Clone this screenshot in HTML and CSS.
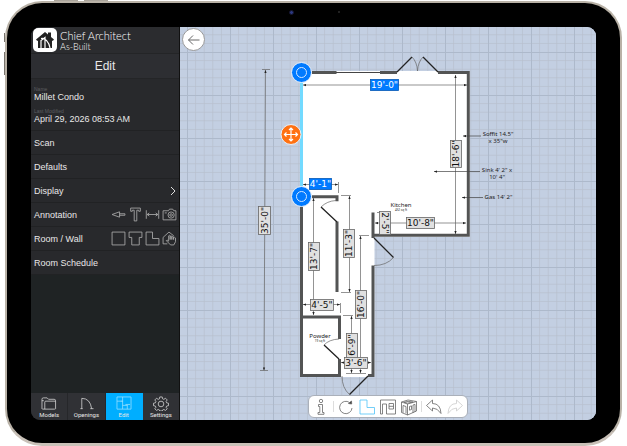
FILE: index.html
```html
<!DOCTYPE html>
<html lang="en">
<head>
<meta charset="utf-8">
<title>Chief Architect As-Built</title>
<link rel="stylesheet" href="styles.css">
</head>
<body>
<div class="tablet">
  <i class="camera"></i><i class="sensor"></i>
  <i class="key key-up"></i><i class="key key-down"></i>
  <i class="side side-a"></i><i class="side side-b"></i>
  <main class="screen">
    <aside class="sidebar">
      <header class="brand">
        <svg class="logo" viewBox="0 0 24 24" aria-hidden="true">
          <rect width="24" height="24" rx="5" fill="#fff"/>
          <path d="M3 11.500 12 4l3 2.500V4.500h3v4.500l3 2.500-1.300 1.500-.7-.5V20H5v-7.500l-.7.500z" fill="#222"/>
          <path d="M8 20V12.500l4-3V20M8 10.500C12 9.500 16 14 17 20" fill="none" stroke="#fff" stroke-width="1.200"/>
        </svg>
        <div class="brand-text"><span class="brand-name">Chief Architect</span><span class="brand-product">As-Built</span></div>
      </header>
      <h1 class="title">Edit</h1>
      <dl class="info">
        <dt>Name</dt><dd>Millet Condo</dd>
        <dt>Last Modified</dt><dd>April 29, 2026 08:53 AM</dd>
      </dl>
      <ul class="menu">
        <li><a href="#scan">Scan</a></li>
        <li><a href="#defaults">Defaults</a></li>
        <li><a href="#display">Display</a>
          <svg class="chevron" viewBox="0 0 6 10" aria-hidden="true"><path d="M1 1l4 4-4 4" fill="none" stroke="#ddd"/></svg></li>
        <li><span>Annotation</span>
          <div class="tools">
            <button aria-label="Arrow"><svg viewBox="0 0 14 14"><path d="M8 4.500 1 7l7 2.500zM8 6.300h5v1.400H8"/></svg></button>
            <button aria-label="Text"><svg viewBox="0 0 14 14"><path d="M2.500 1h9v3H10V3H8.200v10H5.800V3H4v1H2.500z"/></svg></button>
            <button aria-label="Dimension"><svg viewBox="0 0 14 14"><path d="M1.200 3v8M12.800 3v8M2 7h10M4 5.500 2 7l2 1.500M10 5.500 12 7l-2 1.500"/></svg></button>
            <button aria-label="Photo"><svg viewBox="0 0 14 14"><path d="M1 3.500h5l1-1.500h3l1 1.500h2v8.500H1z"/><circle cx="8.500" cy="7.500" r="2.900"/><circle cx="8.500" cy="7.500" r="1.200"/><path d="M2.500 5.500h2"/></svg></button>
          </div></li>
        <li><span>Room / Wall</span>
          <div class="tools">
            <button aria-label="Square room"><svg viewBox="0 0 14 14"><path d="M1 1h12v12H1z"/></svg></button>
            <button aria-label="T-shaped room"><svg viewBox="0 0 14 14"><path d="M1 1h12v5h-2.500v7h-7V6H1z"/></svg></button>
            <button aria-label="L-shaped room"><svg viewBox="0 0 14 14"><path d="M1 1h6v6h6v6H1z"/></svg></button>
            <button aria-label="Draw room"><svg viewBox="0 0 14 14"><path d="M5 12H1V6l5.500-5L11 4.500M6.200 9.500V4.500q.7-1 1.400 0V8V5q.8-1 1.600 0v3V5.500q.8-1 1.600 0V8V6.200q1-.8 1.800.3V10L11 13H8L4 9q.5-1.300 2.200.5"/></svg></button>
          </div></li>
        <li><a href="#schedule">Room Schedule</a></li>
      </ul>
      <nav class="tabs">
        <button class="tab"><svg viewBox="0 0 18 16"><path d="M1.500 13.500V3.500q0-1.500 1.500-1.500h4l1.500 1.500h6q1.500 0 1.500 1.500v8.500q0 .5-1 .5H2.500q-1 0-1-.5zM4.500 14V6.500q0-1 1-1H16M1.500 5h2"/></svg>Models</button>
        <button class="tab"><svg viewBox="0 0 18 16"><path d="M4.500 13.500V2.500q9 0 10.500 11M3 13.500h2.500M13.500 13.500H17"/></svg>Openings</button>
        <button class="tab active"><svg viewBox="0 0 18 16"><path d="M1.500 1h15v13h-15zM7.500 1v5M1.500 5.500h5M7.500 5v9M7.500 10h5M10.500 9h5M12.500 14v-4.500M5.500 5.500h2"/></svg>Edit</button>
        <button class="tab"><svg viewBox="0 0 18 16"><path d="M7.700 1h2.600l.4 2 1.300.6 1.800-1.200 1.800 1.800-1.200 1.800.6 1.300 2 .4v2.600l-2 .4-.6 1.300 1.200 1.600-1.800 1.800-1.800-1.100-1.300.6-.4 1.100H7.700l-.4-1.100-1.300-.6-1.800 1.100-1.800-1.800 1.200-1.600-.6-1.300-2-.4V7.700l2-.4L3.600 6 2.400 4.200l1.800-1.800L6 3.600 7.300 3z"/><circle cx="9" cy="8.500" r="3"/></svg>Settings</button>
      </nav>
    </aside>

    <section class="canvas">
      <svg class="plan" viewBox="180 27 416 393" preserveAspectRatio="xMidYMid slice" role="img" aria-label="Floor plan">
        <defs>
          <pattern id="grid" x="187" y="52" width="43" height="43" patternUnits="userSpaceOnUse">
            <path class="minor" d="M8.600 0v43M17.200 0v43M25.800 0v43M34.400 0v43M0 8.600h43M0 17.200h43M0 25.800h43M0 34.400h43"/>
            <path class="major" d="M.5 0v43M0 .5h43"/>
          </pattern>
          <marker id="tip" viewBox="0 0 4 4" refX="4" refY="2" markerWidth="3" markerHeight="3" markerUnits="userSpaceOnUse" orient="auto-start-reverse"><path d="M0 .5 4 2 0 3.500z" fill="#222"/></marker>
        </defs>
        <rect x="180" y="27" width="416" height="393" fill="#c3cfe2"/>
        <rect x="180" y="27" width="416" height="393" fill="url(#grid)"/>
        <path d="M300 71H470V237H374.500V377H300z" fill="#fff"/>

        <g class="walls">
          <path d="M312 72.500h24.500M380 72.500h17M438 72.500h30.300V235.200H373M373 212.500v25.500M373 265.500v110H368M341 375.500H301.500V200M312 196.700h25v4.500M337 221.500V292M303 317h36.500v22M339.500 359v16"/>
        </g>
        <path d="M336 72.500h44" stroke="#444"/>
        <g class="leaves">
          <path d="M397 72l15-15M438 72l-15-15M374 238l19.500 19.500M337 222l-16-15M339 359l-15-14M368 376l-18.500 18.500"/>
        </g>
        <g class="swings">
          <path d="M412 57q5 5 5.500 14q.5-9 5.500-14M393.500 257.500q-7 8-19.500 8M321 207q6-6 15-6.500M324 345q5-5.500 15-6M342 376q0 12 7.500 18.500"/>
        </g>
        <path class="selected" d="M301.500 78v112"/>

        <g class="dims">
          <path d="M265.500 70 264 370.500"/><path d="M303 85H467"/><path d="M455.500 75V234"/><path d="M303 184.500H338"/>
          <path d="M313.500 198V315"/><path d="M349.500 196V292"/><path d="M360.500 236V373"/><path d="M351.500 316V373"/>
          <path d="M341 362.500H371"/><path d="M303 304.500H340"/><path d="M375 223H466"/>
        </g>
        <path class="ticks" d="M262 69.500h8M260 370.500h8M338.500 182v11M341 195.500h10M341 292.500h10M359 235.500h10M343 315.500h10M340.500 303v10M377 212.500h8M346 373.500h20"/>

        <g class="tags">
          <rect x="258.500" y="206.500" width="12" height="28"/>
          <rect x="450.500" y="140.500" width="11" height="27"/>
          <rect x="308.500" y="242.500" width="11" height="28"/>
          <rect x="343.500" y="229.500" width="11" height="28"/>
          <rect x="355.500" y="290.500" width="11" height="28"/>
          <rect x="346.500" y="333.500" width="11" height="25"/>
          <rect x="344.500" y="357.500" width="23" height="11"/>
          <rect x="310.500" y="299.500" width="23" height="11"/>
          <rect x="406.500" y="217.500" width="28" height="11"/>
          <rect x="379.500" y="211.500" width="11" height="23"/>
          <rect class="hot" x="370.500" y="79.500" width="28" height="11"/>
          <rect class="hot" x="309.500" y="178.500" width="22" height="11"/>
        </g>
        <g class="values">
          <text transform="translate(268 220.500) rotate(-90)">35'-0"</text>
          <text transform="translate(459 154) rotate(-90)">18'-6"</text>
          <text transform="translate(317 256.500) rotate(-90)">13'-7"</text>
          <text transform="translate(352 243.500) rotate(-90)">11'-3"</text>
          <text transform="translate(364 304.500) rotate(-90)">16'-0"</text>
          <text transform="translate(355 345) rotate(-90)">6'-9"</text>
          <text x="356" y="366">3'-6"</text>
          <text x="322" y="308">4'-5"</text>
          <text x="420.500" y="226">10'-8"</text>
          <text transform="translate(382 223) rotate(90)">2'-5"</text>
          <text class="hot" x="384.500" y="88">19'-0"</text>
          <text class="hot" x="320.500" y="187">4'-1"</text>
        </g>

        <g class="notes">
          <text x="401" y="207">Kitchen</text>
          <text class="area" x="401" y="211">452 sq ft</text>
          <text x="320" y="338">Powder</text>
          <text class="area" x="320" y="342">19 sq ft</text>
          <text x="498" y="136">Soffit 14.5"</text>
          <text x="498" y="143">x 35"w</text>
          <text x="497" y="172">Sink 4' 2" x</text>
          <text x="497" y="179">10' 4"</text>
          <text x="498.500" y="199">Gas 14' 2"</text>
        </g>
        <g class="leaders"><path d="M481 136H463"/><path d="M480 171.500H434"/><path d="M483 197.500H462"/></g>

        <g class="handles">
          <circle cx="301.500" cy="72.500" r="10"/><circle class="ring" cx="301.500" cy="72.500" r="5"/>
          <circle cx="301.500" cy="196.500" r="10"/><circle class="ring" cx="301.500" cy="196.500" r="5"/>
          <circle class="move" cx="291" cy="134.500" r="10"/>
          <path class="arrows" d="M284.500 134.500h13M291 128v13M286.500 132.500l-2 2 2 2M295.500 132.500l2 2-2 2M289 130l2-2 2 2M289 139l2 2 2-2"/>
        </g>
      </svg>

      <button class="back" aria-label="Back"><svg viewBox="0 0 14 12"><path d="M12.500 6h-11M6 1.500 1.500 6 6 10.500"/></svg></button>

      <div class="toolbar">
        <button aria-label="Information"><svg viewBox="0 0 18 18"><circle cx="9" cy="3" r="1.700"/><path d="M6.500 6.500h4v8H12v1.800H6v-1.800h1.800v-6H6.500z"/></svg></button>
        <i class="divider"></i>
        <button aria-label="Rotate"><svg viewBox="0 0 18 18"><path d="M12.500 4.500A6.200 6.200 0 1 0 15 10"/><path class="solid" d="M11.500 5.500l3-2.500.2 3z"/></svg></button>
        <button aria-label="Floor plan" class="on"><svg viewBox="0 0 18 18"><path d="M2 2h7v7.500h7.500V16H2z"/></svg></button>
        <button aria-label="Elevation"><svg viewBox="0 0 18 18"><path d="M1.500 16V2h15v14h-9V6h-4v10zM10 5.500h4.500v5.500H10zM10 8.300h4.500"/></svg></button>
        <button aria-label="3D view"><svg viewBox="0 0 18 18"><path d="M1.500 4 8 2l8.500 1.500V13L7.500 17l-6-2.500zM1.500 4l6 2v11M7.500 6l9-2.500M3 14.800V7.500l3 1v7M9.500 8.500l2-.6v3.600l-2 .7zM13 15V7l2-.6v7.600M4 4.300 8 3.300l5 .8-5.500 1z"/></svg></button>
        <i class="divider"></i>
        <button aria-label="Undo"><svg viewBox="0 0 18 18"><path d="M1.500 7.500 7.500 2v3.500q8 0 8.500 10Q12.500 10 7.500 10v3z"/></svg></button>
        <button aria-label="Redo" class="off"><svg viewBox="0 0 18 18"><path d="M16.500 7.500l-6-5.500v3.500q-8 0-8.500 10Q5.500 10 10.500 10v3z"/></svg></button>
      </div>
    </section>
  </main>
</div>
</body>
</html>
```
FILE: styles.css
```css
* { box-sizing: border-box; }

body {
  margin: 0;
  display: flex;
  min-height: 100vh;
  padding: 1px 5px 0;
  background: #fff;
  font-family: "Liberation Sans", Arial, sans-serif;
}

button {
  border: 0;
  padding: 0;
  background: none;
  font: inherit;
  color: inherit;
}

a { color: inherit; text-decoration: none; }

.tablet {
  position: relative;
  display: flex;
  flex: 1;
  padding: 24px 24px 23px;
  border: 2px solid #b9b2a7;
  border-bottom: 3px solid #c9c1b8;
  border-radius: 37px;
  background: #000;
}

.camera, .sensor, .key, .side { position: absolute; }

.camera {
  top: 7px;
  left: 46%;
  width: 5px;
  height: 5px;
  border: 1px solid #15152c;
  border-radius: 50%;
  background: #2b3880;
}

.sensor {
  top: 8px;
  left: 54%;
  width: 2px;
  height: 2px;
  border-radius: 50%;
  background: #2c2c2c;
}

.key { top: -3px; width: 24px; height: 1px; background: #aaa49b; }
.key-up { left: 47px; }
.key-down { left: 77px; }

.side { left: -3px; width: 1px; background: #77726b; }
.side-a { top: 30px; height: 9px; }
.side-b { top: 49px; height: 23px; }

.screen {
  display: flex;
  flex: 1;
  min-width: 0;
  overflow: hidden;
  border-radius: 9px;
}

/* Sidebar */

.sidebar {
  display: flex;
  flex-direction: column;
  flex: 0 0 149px;
  border-right: 1px solid #111;
  background: #1f2324;
  color: #e8e8e8;
  font-size: 9px;
}

.brand {
  display: flex;
  align-items: center;
  gap: 3px;
  height: 27px;
  padding: 0 2px;
  border-bottom: 1px solid #242527;
  background: #2b2c2f;
}

.logo { width: 24px; height: 24px; }

.brand-text {
  display: flex;
  flex-direction: column;
  font-family: Lato, sans-serif;
  font-weight: 300;
  color: #fff;
}

.brand-name { font-size: 11px; line-height: 12px; }
.brand-product { font-size: 9px; line-height: 9px; }

.title {
  margin: 0;
  border-bottom: 1px solid #242527;
  background: #2d2e32;
  font-size: 12px;
  font-weight: 400;
  line-height: 24px;
  text-align: center;
}

.info {
  margin: 0;
  padding: 7px 3px 5px;
  border-bottom: 1px solid #212224;
  background: #28292c;
}

.info dt { color: #5c5d60; font-size: 5px; line-height: 6px; }
.info dd { margin: 0 0 5px; line-height: 11px; }
.info dd:last-child { margin: 0; }
.info dt:last-of-type { margin-top: 5px; }

.menu { margin: 0; padding: 0; list-style: none; }

.menu li {
  display: flex;
  align-items: center;
  justify-content: space-between;
  height: 24px;
  padding: 0 2px 0 3px;
  border-bottom: 1px solid #212224;
  background: #28292c;
}

.chevron { width: 6px; height: 10px; margin-right: 1px; }

.tools { display: flex; gap: 2px; }
.tools button { display: flex; }

.tools svg {
  width: 15px;
  height: 15px;
  fill: none;
  stroke: #aaa;
  stroke-width: 0.8;
}

.tabs { display: flex; margin-top: auto; }

.tab {
  display: flex;
  flex: 1;
  flex-direction: column;
  align-items: center;
  height: 27px;
  padding-top: 3px;
  border-right: 1px solid #26272a;
  background: #303135;
  font-family: Roboto, sans-serif;
  font-size: 6px;
  line-height: 7px;
}

.tab svg {
  width: 18px;
  height: 15px;
  fill: none;
  stroke: #ddd;
  stroke-width: 0.8;
}

.tab:last-child { border-right: 0; }
.tab.active { border-color: #00aeff; background: #00aeff; }
.tab.active svg { stroke: #9ee1ff; }

/* Canvas */

.canvas { position: relative; flex: 1; min-width: 0; background: #c3cfe2; }

.plan {
  position: absolute;
  inset: 0;
  width: 100%;
  height: 100%;
}

.minor { fill: none; stroke: #b7bfcd; stroke-width: 0.7; }
.major { fill: none; stroke: #adb9cb; stroke-width: 1; }

.walls { fill: none; stroke: #535454; stroke-width: 3; }
.leaves { fill: none; stroke: #222; stroke-width: 1.3; }
.swings { fill: none; stroke: #666; stroke-width: 0.7; }
.selected { stroke: #72daff; stroke-width: 3; }

.dims path, .ticks { fill: none; stroke: #666; stroke-width: 0.7; }
.dims path { marker-start: url(#tip); marker-end: url(#tip); }
.tags rect { fill: #e0e0e0; stroke: #666; stroke-width: 0.8; }
.tags .hot { fill: #007aff; stroke: #0759b5; }

.values text {
  fill: #111;
  font: 9px "DejaVu Sans", sans-serif;
  text-anchor: middle;
}

.values .hot { fill: #fff; }

.notes text {
  fill: #222;
  font: 6px "Noto Sans", sans-serif;
  text-anchor: middle;
}

.notes .area { font-size: 3px; }

.leaders path { stroke: #444; stroke-width: 0.7; marker-end: url(#tip); }

.handles circle { fill: #007aff; stroke: #e9f1fb; stroke-width: 1; }
.handles .ring { fill: none; stroke: #d5e8ff; }
.handles .move { fill: #ff7112; }
.arrows { fill: none; stroke: #fff; stroke-width: 1.2; }

.back {
  position: absolute;
  top: 1px;
  left: 2px;
  display: grid;
  place-items: center;
  width: 23px;
  height: 23px;
  border: 1px solid #999;
  border-radius: 50%;
  background: #fff;
}

.back svg { width: 14px; height: 12px; fill: none; stroke: #666; }

.toolbar {
  position: absolute;
  bottom: 2px;
  left: 50%;
  display: flex;
  align-items: center;
  justify-content: space-between;
  width: 160px;
  height: 23px;
  padding: 0 3px;
  border: 1px solid #aab0ba;
  border-radius: 6px;
  background: #fff;
  transform: translateX(-50%);
}

.toolbar button { display: flex; }

.toolbar svg {
  width: 18px;
  height: 18px;
  fill: none;
  stroke: #666;
  stroke-width: 0.8;
}

.toolbar .solid { fill: #333; }
.toolbar .on svg { stroke: #4fc3f7; }
.toolbar .off svg { stroke: #ccc; }
.divider { width: 1px; height: 11px; background: #ddd; }
```
